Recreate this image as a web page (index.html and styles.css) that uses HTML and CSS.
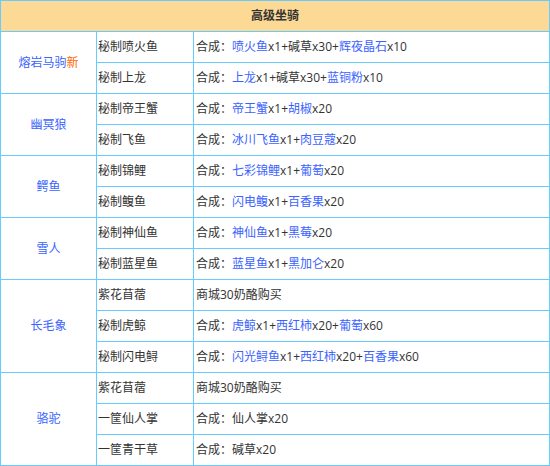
FILE: index.html
```html
<!DOCTYPE html>
<html lang="zh">
<head>
<meta charset="utf-8">
<link rel="stylesheet" href="styles.css">
</head>
<body>
<table class="mounts">
  <colgroup><col class="c1"><col class="c2"><col class="c3"></colgroup>
  <tr><th colspan="3" class="head">高级坐骑</th></tr>
  <tr><td rowspan="2" class="name"><span class="b">熔岩马驹</span><span class="new">新</span></td><td>秘制喷火鱼</td><td>合成：<span class="b">喷火鱼</span>x1+碱草x30+<span class="b">辉夜晶石</span>x10</td></tr>
  <tr><td>秘制上龙</td><td>合成：<span class="b">上龙</span>x1+碱草x30+<span class="b">蓝铜粉</span>x10</td></tr>
  <tr><td rowspan="2" class="name"><span class="b">幽冥狼</span></td><td>秘制帝王蟹</td><td>合成：<span class="b">帝王蟹</span>x1+<span class="b">胡椒</span>x20</td></tr>
  <tr><td>秘制飞鱼</td><td>合成：<span class="b">冰川飞鱼</span>x1+<span class="b">肉豆蔻</span>x20</td></tr>
  <tr><td rowspan="2" class="name"><span class="b">鳄鱼</span></td><td>秘制锦鲤</td><td>合成：<span class="b">七彩锦鲤</span>x1+<span class="b">葡萄</span>x20</td></tr>
  <tr><td>秘制鳆鱼</td><td>合成：<span class="b">闪电鳆</span>x1+<span class="b">百香果</span>x20</td></tr>
  <tr><td rowspan="2" class="name"><span class="b">雪人</span></td><td>秘制神仙鱼</td><td>合成：<span class="b">神仙鱼</span>x1+<span class="b">黑莓</span>x20</td></tr>
  <tr><td>秘制蓝星鱼</td><td>合成：<span class="b">蓝星鱼</span>x1+<span class="b">黑加仑</span>x20</td></tr>
  <tr><td rowspan="3" class="name"><span class="b">长毛象</span></td><td>紫花苜蓿</td><td>商城30奶酪购买</td></tr>
  <tr><td>秘制虎鲸</td><td>合成：<span class="b">虎鲸</span>x1+<span class="b">西红柿</span>x20+<span class="b">葡萄</span>x60</td></tr>
  <tr><td>秘制闪电鲟</td><td>合成：<span class="b">闪光鲟鱼</span>x1+<span class="b">西红柿</span>x20+<span class="b">百香果</span>x60</td></tr>
  <tr><td rowspan="3" class="name"><span class="b">骆驼</span></td><td>紫花苜蓿</td><td>商城30奶酪购买</td></tr>
  <tr><td>一筐仙人掌</td><td>合成：仙人掌x20</td></tr>
  <tr><td>一筐青干草</td><td>合成：碱草x20</td></tr>
</table>
</body>
</html>
```
FILE: styles.css
```css
body {
  margin: 0;
  background: #fff;
}
.mounts {
  border-collapse: collapse;
  table-layout: fixed;
  width: 549px;
  font-family: "Open Sans", "Noto Sans CJK SC", sans-serif;
  font-size: 12px;
  color: #333;
}
.c1 { width: 96px; }
.c2 { width: 97px; }
.c3 { width: 356px; }
.mounts th,
.mounts td {
  border: 1px solid #66ccff;
  height: 30px;
  padding: 0 0 0 1px;
  line-height: 16px;
  vertical-align: middle;
  text-align: left;
  white-space: nowrap;
}
.mounts tr > td:last-child { padding-left: 2px; }
.mounts .head {
  background: #fcd995;
  text-align: center;
  font-weight: bold;
  padding: 0;
}
.mounts .name {
  text-align: center;
  padding: 0;
}
.b { color: #3a63ff; }
.new { color: #ff6600; }
```
